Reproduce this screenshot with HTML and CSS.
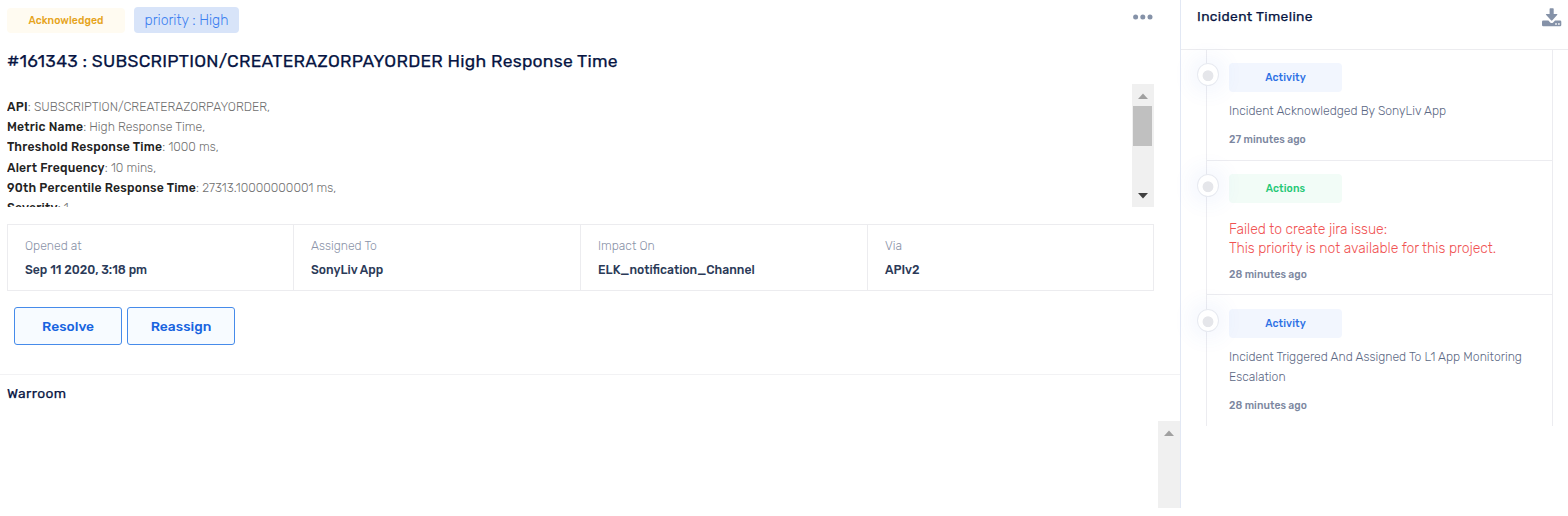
FILE: index.html
```html
<!DOCTYPE html>
<html lang="en">
<head>
<meta charset="utf-8">
<title>Incident</title>
<link rel="stylesheet" href="styles.css">
</head>
<body>
<div class="page">
  <main class="main">
    <div class="tags">
      <span class="tag-ack">Acknowledged</span>
      <span class="tag-priority">priority : High</span>
      <svg class="more" width="20" height="6" viewBox="0 0 20 6"><circle cx="2.6" cy="3" r="2.5"/><circle cx="9.8" cy="3" r="2.5"/><circle cx="17" cy="3" r="2.5"/></svg>
    </div>
    <h1 class="title">#161343 : SUBSCRIPTION/CREATERAZORPAYORDER High Response Time</h1>
    <div class="details">
      <div class="lines">
        <div><b>API</b>: SUBSCRIPTION/CREATERAZORPAYORDER,</div>
        <div><b>Metric Name</b>: High Response Time,</div>
        <div><b>Threshold Response Time</b>: 1000 ms,</div>
        <div><b>Alert Frequency</b>: 10 mins,</div>
        <div><b>90th Percentile Response Time</b>: 27313.10000000001 ms,</div>
        <div><b>Severity</b>: 1</div>
      </div>
      <div class="scroll">
        <svg width="10" height="6" viewBox="0 0 10 6"><path d="M0 6L5 0.5L10 6Z" fill="#a0a0a0"/></svg>
        <div class="thumb"></div>
        <svg class="down" width="10" height="6" viewBox="0 0 10 6"><path d="M0 0L5 5.5L10 0Z" fill="#404040"/></svg>
      </div>
    </div>
    <div class="meta">
      <div class="cell"><div class="label">Opened at</div><div class="value">Sep 11 2020, 3:18 pm</div></div>
      <div class="cell"><div class="label">Assigned To</div><div class="value">SonyLiv App</div></div>
      <div class="cell"><div class="label">Impact On</div><div class="value">ELK_notification_Channel</div></div>
      <div class="cell"><div class="label">Via</div><div class="value">APIv2</div></div>
    </div>
    <div class="buttons"><button class="btn">Resolve</button><button class="btn">Reassign</button></div>
    <section class="warroom">
      <h2 class="subtitle">Warroom</h2>
      <div class="scroll room-scroll">
        <svg width="10" height="6" viewBox="0 0 10 6"><path d="M0 6L5 0.5L10 6Z" fill="#a0a0a0"/></svg>
      </div>
    </section>
  </main>
  <aside class="side">
    <header class="side-head">
      <h2 class="subtitle">Incident Timeline</h2>
      <svg class="download" width="20" height="20" viewBox="0 0 20 20"><path fill="#8592a8" fill-rule="evenodd" d="M7.6 1Q7.6 .3 8.3 .3H11Q11.7 .3 11.7 1V6H14.8Q16 6 15.1 7L10.4 12.3Q9.7 13.1 9 12.3L4.2 7Q3.3 6 4.5 6H7.6ZM1.2 12.5H6.4L8.2 14.4Q9.7 15.5 11.2 14.4L13 12.5H18.1Q19.3 12.5 19.3 13.7V17Q19.3 18.2 18.1 18.2H1.2Q0 18.2 0 17V13.7Q0 12.5 1.2 12.5ZM13.2 15.2V16.8H14.8V15.2ZM16.1 15.2V16.8H17.7V15.2Z"/></svg>
    </header>
    <div class="timeline">
      <article class="event first">
        <i class="dot"></i>
        <div class="chip">Activity</div>
        <div class="text">Incident Acknowledged By SonyLiv App</div>
        <div class="time">27 minutes ago</div>
      </article>
      <article class="event second">
        <i class="dot"></i>
        <div class="chip green">Actions</div>
        <div class="error">Failed to create jira issue:<br>This priority is not available for this project.</div>
        <div class="time">28 minutes ago</div>
      </article>
      <article class="event third">
        <i class="dot"></i>
        <div class="chip">Activity</div>
        <div class="text">Incident Triggered And Assigned To L1 App Monitoring<br>Escalation</div>
        <div class="time">28 minutes ago</div>
      </article>
    </div>
  </aside>
</div>
</body>
</html>
```
FILE: styles.css
```css
* { box-sizing: border-box; }
body { margin: 0; background: #fff; font-family: Rubik, Roboto, sans-serif; height: 516px; overflow: hidden; }
.page { display: flex; width: 1568px; height: 508px; }
.main { width: 1180px; display: flex; flex-direction: column; white-space: nowrap; }
.tags { display: flex; align-items: center; gap: 9px; height: 26px; margin: 7px 27px 0 7px; }
.tag-ack { width: 118px; height: 25px; display: flex; align-items: center; justify-content: center; border-radius: 4px; background: #fffbf1; color: #e6a41c; font-size: 10.5px; font-weight: 500; letter-spacing: .05px; }
.tag-priority { width: 105px; height: 26px; display: flex; align-items: center; justify-content: center; border-radius: 4px; background: #d8e4f9; color: #3c7ff0; font-size: 14px; font-weight: 300; }
.more { margin-left: auto; margin-top: -6px; fill: #8592a8; }
.title { margin: 16px 0 0 7px; height: 24px; line-height: 24px; color: #071543; font-size: 17.5px; font-weight: 400; letter-spacing: .26px; -webkit-text-stroke: .25px #071543; }
.details { display: flex; justify-content: space-between; margin: 11px 26px 0 7px; height: 123px; overflow: hidden; }
.lines { padding-top: 13px; font-size: 12.2px; line-height: 20.17px; color: #6f6f6f; font-weight: 300; letter-spacing: .02px; }
.lines b { color: #222; font-weight: 500; letter-spacing: .22px; }
.scroll { width: 22px; height: 123px; background: #f0f0f0; display: flex; flex-direction: column; align-items: center; padding-top: 9px; }
.thumb { width: 19px; height: 40px; margin: 7px 1px 0 0; background: #c0c0c0; }
.down { margin: auto 0 8px; }
.meta { display: grid; grid-template-columns: 286px 287px 286px 1fr; height: 67px; margin: 17px 26px 0 7px; border: 1px solid #ececef; }
.cell { padding: 11px 0 0 17px; border-left: 1px solid #ececef; }
.cell:first-child { border-left: 0; }
.cell:not(:first-child) { margin-left: -1px; }
.cell:last-child { margin-left: 0; }
.label { height: 20px; line-height: 20px; font-size: 12.2px; font-weight: 300; color: #8a93a8; }
.value { margin-top: 4px; height: 20px; line-height: 20px; font-size: 12.2px; font-weight: 500; color: #2b3a58; }
.buttons { display: flex; gap: 5px; margin: 16px 0 0 14px; }
.btn { width: 108px; height: 38px; padding: 0; border: 1px solid #468bea; border-radius: 3px; background: #f7fbff; color: #1764df; font: 500 13.8px Rubik, Roboto, sans-serif; letter-spacing: .03px; }
.warroom { margin-top: 29px; border-top: 1px solid #f2f2f4; height: 134px; display: flex; flex-direction: column; }
.subtitle { margin: 0; color: #071543; font-size: 13.8px; line-height: 20px; font-weight: 400; letter-spacing: .36px; -webkit-text-stroke: .25px #071543; }
.warroom .subtitle { margin: 8px 0 0 7px; }
.room-scroll { margin: 18px 0 0 auto; height: 87px; }
.side { width: 388px; border-left: 1px solid #e2e8f4; white-space: nowrap; }
.side-head { display: flex; justify-content: space-between; align-items: flex-start; height: 50px; padding: 6px 6px 0 16px; border-bottom: 1px solid #ececef; }
.download { margin-top: 2px; }
.timeline { width: 347px; margin-left: 25px; border: solid #ececf0; border-width: 0 1px; }
.event { position: relative; padding: 13px 0 0 22px; border-bottom: 1px solid #ececf0; }
.first { height: 111px; }
.second { height: 134px; }
.third { height: 131px; border-bottom: 0; }
.dot { position: absolute; left: -10px; top: 13px; width: 22px; height: 23px; border: 1px solid #e7eaf1; border-radius: 50%; background: radial-gradient(circle at 50% 56%, #e5e6ea 5px, #fff 5.8px); box-shadow: 0 0 22px 5px rgba(70,120,230,.08); }
.third .dot { top: 14px; }
.chip { width: 113px; height: 29px; display: flex; align-items: center; justify-content: center; border-radius: 4px; background: #f2f6fe; color: #2e71e5; font-size: 10.5px; font-weight: 500; letter-spacing: .1px; }
.green { background: #f2fcf7; color: #24c875; }
.text { margin-top: 9px; font-size: 12.2px; line-height: 20.17px; font-weight: 300; color: #5c6884; }
.time { margin-top: 10px; height: 18px; line-height: 18px; font-size: 10.4px; font-weight: 500; color: #7c87a0; letter-spacing: .03px; }
.error { margin-top: 17px; font-size: 13.95px; line-height: 19px; font-weight: 300; color: #f05252; }
.second .time { margin-top: 8px; }
.third .chip { margin-top: 1px; }
```
